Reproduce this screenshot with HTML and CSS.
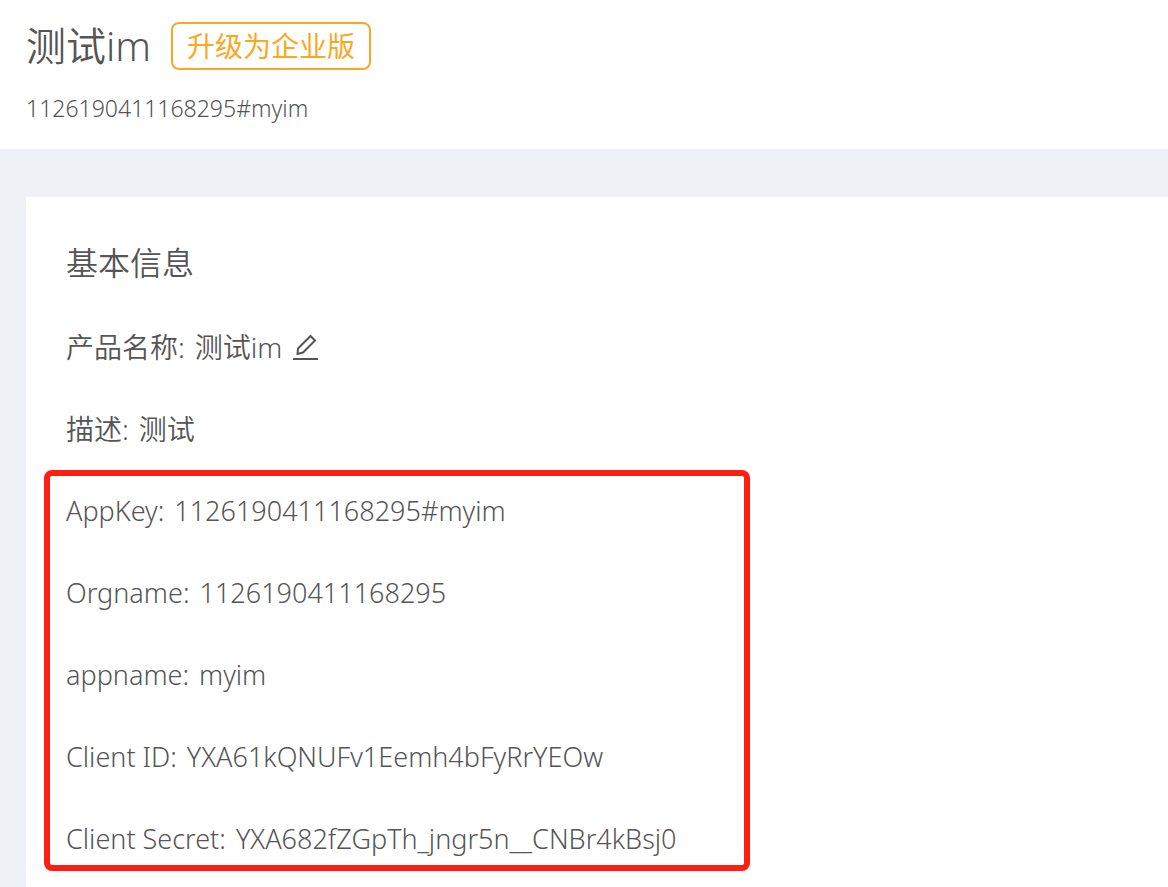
FILE: index.html
```html
<!DOCTYPE html>
<html lang="zh-CN">
<head>
<meta charset="utf-8">
<title>测试im</title>
<link rel="stylesheet" href="styles.css">
</head>
<body>
<header class="page-header">
  <div class="title-row">
    <h1 class="title">测试im</h1>
    <button class="upgrade" type="button">升级为企业版</button>
  </div>
  <p class="app-key">1126190411168295#myim</p>
</header>
<main class="content">
  <section class="card">
    <h2 class="card-title">基本信息</h2>
    <dl class="info">
      <div class="row"><dt>产品名称:</dt><dd class="editable">测试im
        <button class="edit" type="button" aria-label="编辑">
          <svg viewBox="0 0 28 28" width="28" height="28" fill="none" stroke="#555" stroke-width="2"><path d="M1 26H26M5.500 21L6 15.500L18.500 3L23 7.500L11 19.500Z"/></svg>
        </button></dd>
      </div>
      <div class="row"><dt>描述:</dt><dd>测试</dd></div>
    </dl>
    <dl class="info highlight">
      <div class="row"><dt>AppKey:</dt><dd>1126190411168295#myim</dd></div>
      <div class="row"><dt>Orgname:</dt><dd>1126190411168295</dd></div>
      <div class="row"><dt>appname:</dt><dd>myim</dd></div>
      <div class="row"><dt>Client ID:</dt><dd>YXA61kQNUFv1Eemh4bFyRrYEOw</dd></div>
      <div class="row"><dt>Client Secret:</dt><dd>YXA682fZGpTh_jngr5n__CNBr4kBsj0</dd></div>
    </dl>
  </section>
</main>
</body>
</html>
```
FILE: styles.css
```css
* { box-sizing: border-box; }
body {
  margin: 0;
  background: #f0f1f6;
  color: #555;
  font-family: "Noto Sans", "Noto Sans CJK SC", sans-serif;
  font-weight: 350;
}
h1, h2, p, dl, dd { margin: 0; font-weight: inherit; }
.page-header { background: #fff; padding: 20px 26px 24px; }
.title-row { display: flex; align-items: center; gap: 20px; height: 52px; }
.title { font-size: 40px; line-height: 50px; }
.upgrade {
  height: 48px;
  padding: 0 14px;
  border: 2px solid #f9a825;
  border-radius: 8px;
  background: #fff;
  color: #f9a825;
  font: inherit;
  font-size: 28px;
  font-weight: 400;
  line-height: 44px;
}
.app-key { margin-top: 20px; font-size: 23px; line-height: 33px; }
.content { padding: 48px 0 0 26px; }
.card { background: #fff; padding: 40px 18px 16px; }
.card-title { padding-left: 22px; font-size: 32px; line-height: 52px; }
.info {
  display: flex;
  flex-direction: column;
  gap: 44px;
  padding: 39px 0 0 22px;
  font-size: 28px;
  line-height: 38px;
}
.row { display: flex; align-items: center; gap: 10px; height: 38px; }
.editable { display: flex; align-items: center; gap: 10px; }
.edit { display: flex; padding: 0; border: 0; background: none; }
.highlight {
  max-width: 706px;
  margin-top: 22px;
  padding: 16px 16px 7px;
  border: 6px solid #ff1f12;
  border-radius: 8px;
  font-size: 27px;
}
```
